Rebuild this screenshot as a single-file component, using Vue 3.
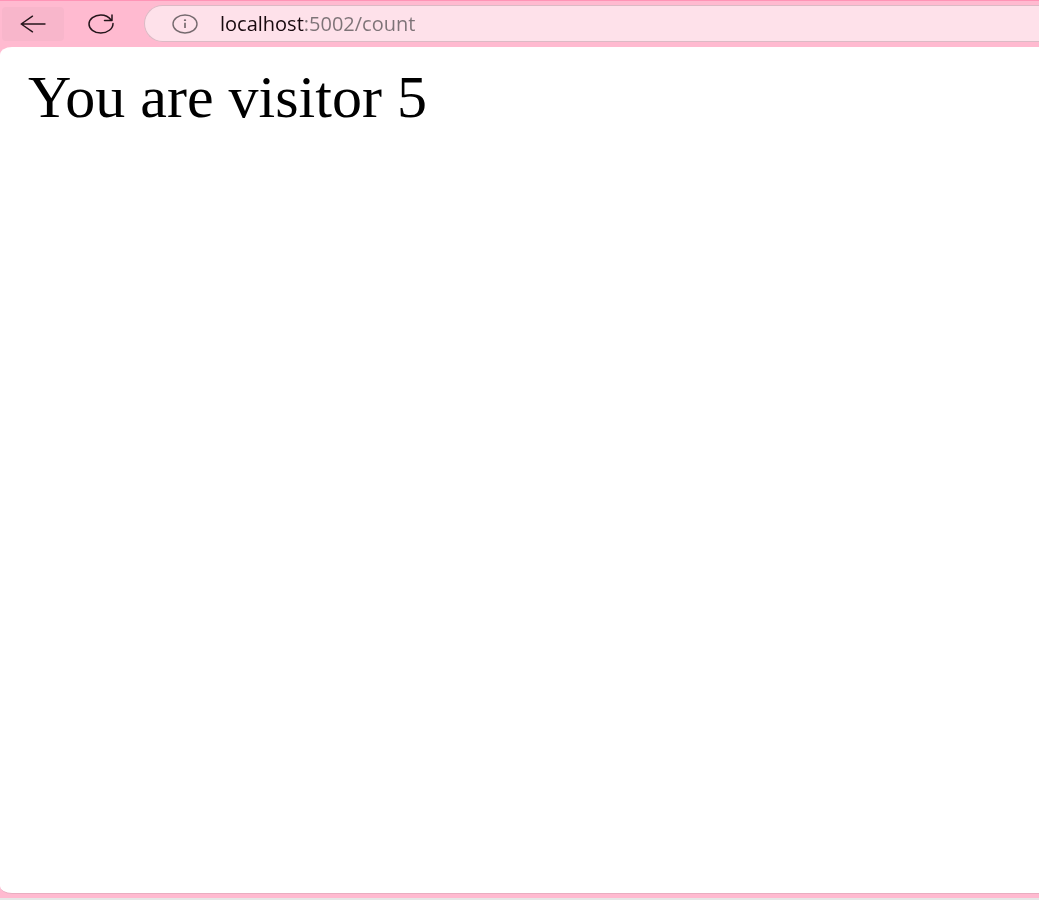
<script setup>
import { ref } from 'vue'

const address = ref('localhost:5002/count')
const visitor = ref(5)
</script>

<template>
  <div class="browser">
    <header class="toolbar">
      <button class="tool back" type="button" aria-label="Back">
        <svg width="26" height="18" viewBox="0 0 26 18" fill="none" stroke="#24151b" stroke-width="1.4" stroke-linecap="round" stroke-linejoin="round" aria-hidden="true">
          <path d="M25 9H1.2M12.5 1.2L1.2 9l11.3 7.8" />
        </svg>
      </button>
      <button class="tool" type="button" aria-label="Refresh">
        <svg width="26" height="20" viewBox="0 0 26 20" fill="none" stroke="#24151b" stroke-width="1.5" stroke-linecap="round" stroke-linejoin="round" aria-hidden="true">
          <path d="M25 9.4C25 14.8 19.5 19 12.8 19S1 14.9 1 10 6.3 1 12.8 1c4.4 0 8 1.8 10.4 5M24 1v5.4h-7.500" />
        </svg>
      </button>
      <form class="omnibox" @submit.prevent>
        <button class="info" type="button" aria-label="View site information">
          <svg width="26" height="20" viewBox="0 0 26 20" fill="none" aria-hidden="true">
            <ellipse cx="13" cy="10" rx="12" ry="9" stroke="#756a6e" stroke-width="1.4" />
            <path d="M13 8.8V14" stroke="#756a6e" stroke-width="1.7" />
            <ellipse cx="13" cy="6.2" rx="1.2" ry="0.9" fill="#756a6e" />
          </svg>
        </button>
        <input v-model="address" class="address" type="text" aria-label="Address" spellcheck="false" />
      </form>
    </header>
    <main class="page">
      <p class="message">You are visitor {{ visitor }}</p>
    </main>
  </div>
</template>

<style>
body {
  margin: 0;
}
</style>

<style scoped>
.browser {
  box-sizing: border-box;
  min-height: 100vh;
  display: flex;
  flex-direction: column;
  background: #ffbad0;
  border-top: 1px solid #ff94b6;
  border-bottom: 2px solid #e6e6e6;
  padding-bottom: 4px;
  overflow: hidden;
}

.toolbar {
  box-sizing: border-box;
  display: flex;
  align-items: center;
  height: 46px;
  padding-left: 2px;
  padding-bottom: 1px;
}

.tool {
  display: flex;
  align-items: center;
  justify-content: center;
  width: 62px;
  height: 34px;
  margin-right: 6px;
  padding: 0;
  border: 0;
  border-radius: 4px;
  background: transparent;
}

.back {
  background: #f8b6cb;
}

.omnibox {
  box-sizing: border-box;
  flex: 1;
  display: flex;
  align-items: center;
  height: 37px;
  margin-left: 6px;
  padding-left: 27px;
  border: 1px solid #dcbac5;
  border-right: 0;
  border-radius: 24px 0 0 24px;
  background: #fee1ea;
}

.info {
  display: flex;
  padding: 0;
  border: 0;
  background: transparent;
}

.address {
  flex: 1;
  min-width: 0;
  height: 28px;
  margin-left: 22px;
  padding: 0;
  border: 0;
  outline: 0;
  font: 20px/28px "Open Sans", "Noto Sans", sans-serif;
  color: transparent;
  caret-color: #17090e;
  background: linear-gradient(90deg, #17090e 84px, #7d7377 84px);
  -webkit-background-clip: text;
  background-clip: text;
}

.page {
  flex: 1;
  padding: 20px 28px;
  border-radius: 12px 0 0 12px / 8px 0 0 8px;
  border-bottom: 1px solid #e9adc0;
  background: #fff;
}

.message {
  margin: 0;
  font: 60px/60px "Liberation Serif", "Times New Roman", serif;
  color: #000;
}
</style>
